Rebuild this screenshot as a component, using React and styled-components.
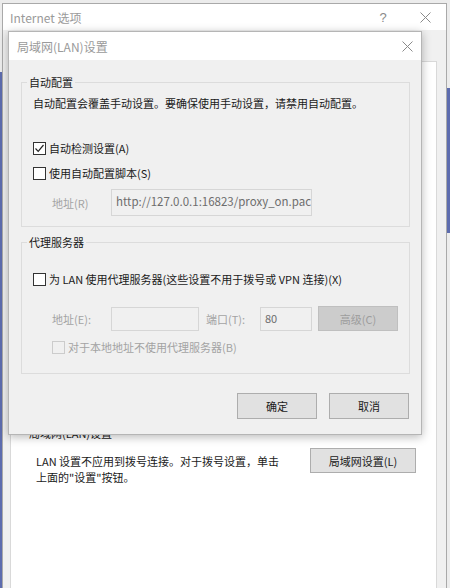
import React from 'react'
import styled, { createGlobalStyle } from 'styled-components'

const GlobalStyle = createGlobalStyle`
  html, body {
    margin: 0;
    padding: 0;
    background: #e9e9e9;
  }
  body {
    font-family: "Noto Sans CJK SC", "Noto Sans", sans-serif;
    font-size: 11px;
    color: #1a1a1a;
  }
`

// the desktop the two windows sit on
const Desktop = styled.div`
  position: relative;
  width: 450px;
  height: 588px;
  overflow: hidden;
  background: #ececec;
`
const BackApp = styled.div`
  position: absolute;
  left: ${p => p.left}px;
  top: ${p => p.top}px;
  width: ${p => p.width}px;
  height: ${p => p.height}px;
  background: ${p => p.bg};
`

const Window = styled.div`
  position: absolute;
  left: 2px;
  top: 3px;
  width: 445px;
  height: 620px;
  box-sizing: border-box;
  border: 1px solid #a9a9a9;
  background: #f0f0f0;
  display: flex;
  flex-direction: column;
`
const TitleBar = styled.div`
  height: ${p => p.h}px;
  flex: none;
  background: #fff;
  display: flex;
  align-items: center;
  padding-left: ${p => p.pad}px;
  color: #9a9a9a;
  font-size: 12px;
`
const TitleText = styled.span`
  flex: 1;
`
const TitleButton = styled.span`
  width: ${p => p.w}px;
  display: flex;
  justify-content: center;
  align-items: center;
  color: #8a8a8a;
  font-family: "Liberation Sans", sans-serif;
  font-size: 13px;
`
const WinBody = styled.div`
  flex: 1;
  padding: 31px 9px 0 7px;
  display: flex;
  flex-direction: column;
`
// the tab page; its upper groups lie hidden under the dialog
const TabPage = styled.div`
  flex: 1;
  background: #fff;
  border: 1px solid #d9d9d9;
  padding: 363px 20px 0 18px;
`
const SectionTitle = styled.div`
  height: 16px;
  line-height: 16px;
  color: #1a1a1a;
`
const SectionRow = styled.div`
  display: flex;
  justify-content: space-between;
  align-items: flex-start;
  padding: 7px 0 0 7px;
`
const Note = styled.div`
  line-height: 16px;
  padding-top: 5px;
`

const Dialog = styled.div`
  position: absolute;
  left: 8px;
  top: 31px;
  width: 414px;
  height: 404px;
  box-sizing: border-box;
  border: 1px solid #b5b5b5;
  background: #f0f0f0;
  box-shadow: 0 2px 9px rgba(0, 0, 0, 0.28);
  display: flex;
  flex-direction: column;
`
const DialogBody = styled.div`
  flex: 1;
  padding: 14px 11px 0 12px;
  display: flex;
  flex-direction: column;
`
const Group = styled.fieldset`
  margin: ${p => p.mt || 0}px 0 0 0;
  border: 1px solid #dcdcdc;
  padding: ${p => p.pt}px 10px ${p => p.pb}px 11px;
  min-width: 0;
`
const Legend = styled.legend`
  padding: 0 2px;
  margin-left: -6px;
  line-height: 16px;
  color: #1a1a1a;
`
const Text = styled.div`
  line-height: 16px;
  color: ${p => (p.disabled ? '#a3a3a3' : '#1a1a1a')};
  margin-top: ${p => p.mt || 0}px;
`
const CheckRow = styled.label`
  display: flex;
  align-items: center;
  gap: 3px;
  height: 16px;
  margin-top: ${p => p.mt || 0}px;
  margin-left: ${p => p.indent || 0}px;
  color: ${p => (p.disabled ? '#a3a3a3' : '#1a1a1a')};
`
const Box = styled.span`
  width: 13px;
  height: 13px;
  box-sizing: border-box;
  border: 1px solid ${p => (p.disabled ? '#cccccc' : '#333')};
  background: ${p => (p.disabled ? '#f0f0f0' : '#fff')};
  display: flex;
  align-items: center;
  justify-content: center;
`
const FieldRow = styled.div`
  display: flex;
  align-items: center;
  margin-top: ${p => p.mt || 0}px;
  padding-left: 19px;
`
const FieldLabel = styled.span`
  width: ${p => p.w}px;
  flex: none;
  color: #a3a3a3;
`
const Input = styled.div`
  width: ${p => p.w}px;
  height: ${p => p.h || 24}px;
  box-sizing: border-box;
  border: 1px solid #d6d6d6;
  background: #f0f0f0;
  color: #6d6d6d;
  padding: 0 4px;
  line-height: ${p => (p.h || 24) - 4}px;
  overflow: hidden;
  white-space: nowrap;
  margin-right: ${p => p.mr || 0}px;
  font-size: ${p => p.fs || 11}px;
`
const Button = styled.div`
  width: ${p => p.w || 80}px;
  height: ${p => p.h || 26}px;
  box-sizing: border-box;
  flex: none;
  display: flex;
  align-items: center;
  justify-content: center;
  border: 1px solid ${p => (p.disabled ? '#bfbfbf' : '#adadad')};
  background: ${p => (p.disabled ? '#cccccc' : '#e1e1e1')};
  color: ${p => (p.disabled ? '#9d9d9d' : '#1a1a1a')};
`
const ButtonBar = styled.div`
  display: flex;
  justify-content: flex-end;
  gap: 12px;
  margin-top: 19px;
  padding-right: 1px;
`

const CloseIcon = ({ size = 11 }) => (
  <svg width={size} height={size} viewBox="0 0 11 11">
    <path d="M0.5 0.5 L10.5 10.5 M10.5 0.5 L0.5 10.5" stroke="#8a8a8a" strokeWidth="1" fill="none" />
  </svg>
)

const Check = ({ checked, disabled, label, mt, indent }) => (
  <CheckRow mt={mt} indent={indent} disabled={disabled}>
    <Box disabled={disabled}>
      {checked && (
        <svg width="11" height="11" viewBox="0 0 11 11">
          <polyline points="1.5,5.5 4.2,8.3 9.5,2" stroke="#222" strokeWidth="1.2" fill="none" />
        </svg>
      )}
    </Box>
    <span>{label}</span>
  </CheckRow>
)

export default function App() {
  return (
    <Desktop>
      <GlobalStyle />
      <BackApp left={0} top={72} width={8} height={516} bg="#5d6cae" />
      <BackApp left={440} top={88} width={10} height={145} bg="#5d6cae" />

      <Window>
        <TitleBar h={26} pad={7}>
          <TitleText>Internet 选项</TitleText>
          <TitleButton w={42}>?</TitleButton>
          <TitleButton w={42}><CloseIcon /></TitleButton>
        </TitleBar>
        <WinBody>
          <TabPage>
            <SectionTitle>局域网(LAN)设置</SectionTitle>
            <SectionRow>
              <Note>
                LAN 设置不应用到拨号连接。对于拨号设置，单击<br />
                上面的"设置"按钮。
              </Note>
              <Button w={106} h={25}>局域网设置(L)</Button>
            </SectionRow>
          </TabPage>
        </WinBody>
      </Window>

      <Dialog>
        <TitleBar h={28} pad={8}>
          <TitleText>局域网(LAN)设置</TitleText>
          <TitleButton w={28}><CloseIcon /></TitleButton>
        </TitleBar>
        <DialogBody>
          <Group pt={5} pb={10}>
            <Legend>自动配置</Legend>
            <Text>自动配置会覆盖手动设置。要确保使用手动设置，请禁用自动配置。</Text>
            <Check checked label="自动检测设置(A)" mt={29} />
            <Check label="使用自动配置脚本(S)" mt={9} />
            <FieldRow mt={8}>
              <FieldLabel w={59}>地址(R)</FieldLabel>
              <Input w={201} h={27} fs={11.5}>http://127.0.0.1:16823/proxy_on.pac</Input>
            </FieldRow>
          </Group>
          <Group mt={7} pt={21} pb={18}>
            <Legend>代理服务器</Legend>
            <Check label="为 LAN 使用代理服务器(这些设置不用于拨号或 VPN 连接)(X)" />
            <FieldRow mt={19}>
              <FieldLabel w={59}>地址(E):</FieldLabel>
              <Input w={88} mr={7} />
              <FieldLabel w={54}>端口(T):</FieldLabel>
              <Input w={52} mr={6}>80</Input>
              <Button disabled h={25}>高级(C)</Button>
            </FieldRow>
            <Check disabled indent={19} mt={8} label="对于本地地址不使用代理服务器(B)" />
          </Group>
          <ButtonBar>
            <Button>确定</Button>
            <Button>取消</Button>
          </ButtonBar>
        </DialogBody>
      </Dialog>
    </Desktop>
  )
}
